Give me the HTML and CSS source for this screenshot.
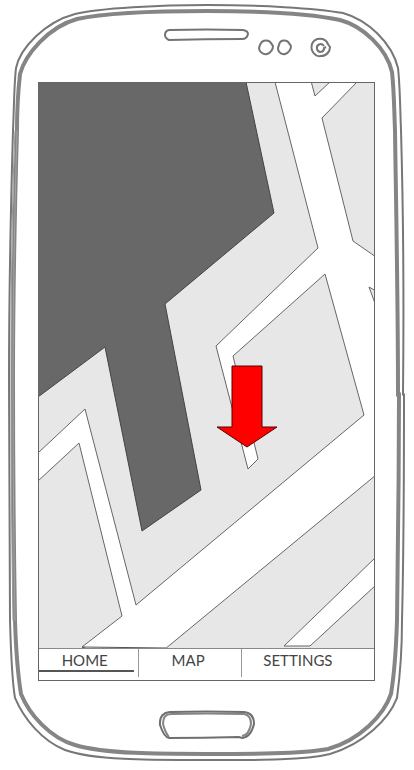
FILE: index.html
```html
<!DOCTYPE html>
<html lang="en">
<head>
<meta charset="utf-8">
<meta name="viewport" content="width=device-width, initial-scale=1">
<title>Map</title>
<link rel="stylesheet" href="styles.css">
</head>
<body>
<div class="phone">
  <svg class="phone-frame" viewBox="0 0 414 770" preserveAspectRatio="none" aria-hidden="true">
    <path class="edge" d="M207 5C160 5 100 8 75 14C45 22 20 48 16 68C14 85 14 110 13 130C11 200 9 280 9 380C9 480 9 560 10 620C11 655 12 680 15 697C24 718 42 740 65 749C95 760 160 759 207 759C250 759 300 760 330 753C364 743 389 718 397 697C400 675 402 650 402 620C404 540 404 470 404 394L403 394C404 300 403 200 401 130C400 105 400 85 398 68C392 43 368 20 343 13C315 8 260 5 207 5Z"/>
    <path class="rim" d="M207 11C160 11 105 13 77 19C48 27 25 55 20 74C18 92 17 110 17 130C15 200 13 280 13 380C13 480 14 560 15 620C16 650 18 675 21 693C29 713 50 737 75 744C105 753 160 753 207 753C250 753 300 753 328 748C360 739 384 714 391 693C394 675 396 650 397 620C398 540 399 470 399 394L398 394C398 300 396 200 395 130C394 105 394 90 392 72C387 49 363 26 340 20C312 14 260 11 207 11Z"/>
    <path class="rim-line" d="M15 130C12 200 11 280 11 380C11 480 12 560 13 620"/>
    <path class="rim-shine" d="M17 130C15 200 13 280 13 380C13 480 14 560 15 620"/>
  </svg>

  <header class="sensors">
    <svg class="sensors-art" viewBox="0 0 414 82" aria-hidden="true">
      <path d="M169 30Q207 29 243 30Q248 31 248 34Q247 39 242 39Q205 39 169 40Q165 38 165 35Q165 31 169 30Z"/>
      <path d="M272 45C270 39 262 39 260 45C257 51 263 55 267 54C271 53 273 49 273 46L271 43"/>
      <path d="M290 45C288 39 280 39 279 45C276 51 281 55 285 54C289 53 291 49 291 46L289 43"/>
      <path d="M328 44C325 37 315 37 312 44C310 51 315 57 321 56C327 56 330 51 330 47L327 43"/>
      <path d="M324 46C321 42 316 45 317 49C318 53 324 53 324 48L326 47"/>
    </svg>
  </header>

  <main class="screen">
    <svg class="map" viewBox="39 83 335 565" preserveAspectRatio="none" role="img" aria-label="Street map with a marker">
      <path class="block" d="M38 82H275L318 248L216 346L248 469L258 459L233 356L325 274L364 415L136 605L85 409L38 453Z"/>
      <path class="block" d="M38 481L79 443L122 616L82 647L90 649H38Z"/>
      <path class="block" d="M165 649L376 475V557L284 646H310L376 585V650H165Z"/>
      <path class="block" d="M311 81L315 96L331 81Z"/>
      <path class="block" d="M358 81L322 118L353 241L376 257V81Z"/>
      <path class="block" d="M376 291L369 287L376 306Z"/>
      <path class="road" d="M82 647L166 648V650H90Z"/>
      <path class="building" d="M38 82H246L274 213L165 304L201 490L142 531L105 347L38 397Z"/>
      <path class="marker" d="M232 366H262V427H277L247 447L217 427H232Z"/>
    </svg>
    <nav class="tabs">
      <a class="tab tab-active" href="#home">HOME</a>
      <a class="tab" href="#map">MAP</a>
      <a class="tab tab-wide" href="#settings">SETTINGS</a>
    </nav>
  </main>

  <footer class="chin">
    <button class="home-key" type="button" aria-label="Home">
      <svg viewBox="0 0 98 30" aria-hidden="true">
        <path class="key-line" d="M12 2Q48 1 86 2Q96 3 96 14Q93 27 84 28L81 27Q45 28 11 28Q6 27 2 15Q1 3 12 2Z"/>
        <path class="key-inner" d="M11 27Q7 22 5 14Q5 4 13 4Q48 3 86 4Q93 5 93 14Q91 25 84 26"/>
      </svg>
    </button>
  </footer>
</div>
</body>
</html>
```
FILE: styles.css
```css
* {
  box-sizing: border-box;
}

body {
  margin: 0;
  background: #fff;
  font-family: Lato, "Open Sans", sans-serif;
}

.phone {
  position: relative;
  display: grid;
  grid-template-rows: 82px 1fr 90px;
  min-height: 100vh;
}

.phone-frame {
  position: absolute;
  inset: 0;
  width: 100%;
  height: 100%;
  fill: none;
  pointer-events: none;
}

.edge {
  stroke: #777;
  stroke-width: 2;
}

.rim {
  stroke: #858585;
  stroke-width: 4;
}

.rim-line {
  stroke: #999;
  stroke-width: 1;
}

.rim-shine {
  stroke: #a2a2a2;
  stroke-width: 1;
}

.sensors {
  display: flex;
  justify-content: center;
}

.sensors-art {
  width: 100%;
  height: 100%;
  fill: none;
  stroke: #747474;
  stroke-width: 2;
}

.screen {
  display: flex;
  flex-direction: column;
  margin: 0 39px 0 38px;
  border: 1px solid #666;
}

.map {
  flex: 1;
  width: 100%;
  min-height: 0;
}

.block {
  fill: #e7e7e7;
  stroke: #666;
  stroke-width: 1;
}

.road {
  fill: #fff;
  stroke: #555;
  stroke-width: 1;
}

.building {
  fill: #686868;
  stroke: #444;
  stroke-width: 1;
}

.marker {
  fill: #f00;
  stroke: #500;
  stroke-width: 1;
}

.tabs {
  display: grid;
  grid-template-columns: 100fr 103fr 134fr;
  height: 32px;
  border-top: 1px solid #888;
  background: #fff;
}

.tab {
  height: 28px;
  padding-right: 4px;
  border-left: 1px solid #999;
  color: #444;
  font-size: 15px;
  line-height: 22px;
  text-align: center;
  text-decoration: none;
}

.tab-active {
  height: 23px;
  margin-right: 4px;
  border-bottom: 2px solid #555;
  border-left: 0;
}

.tab-wide {
  padding-right: 20px;
}

.chin {
  display: flex;
  align-items: flex-start;
  justify-content: center;
  padding-top: 29px;
}

.home-key {
  width: 98px;
  height: 30px;
  padding: 0;
  border: 0;
  background: none;
}

.home-key svg {
  display: block;
  width: 100%;
  height: 100%;
  fill: none;
}

.key-line {
  stroke: #6f6f6f;
  stroke-width: 2;
}

.key-inner {
  stroke: #858585;
  stroke-width: 2;
}
```
